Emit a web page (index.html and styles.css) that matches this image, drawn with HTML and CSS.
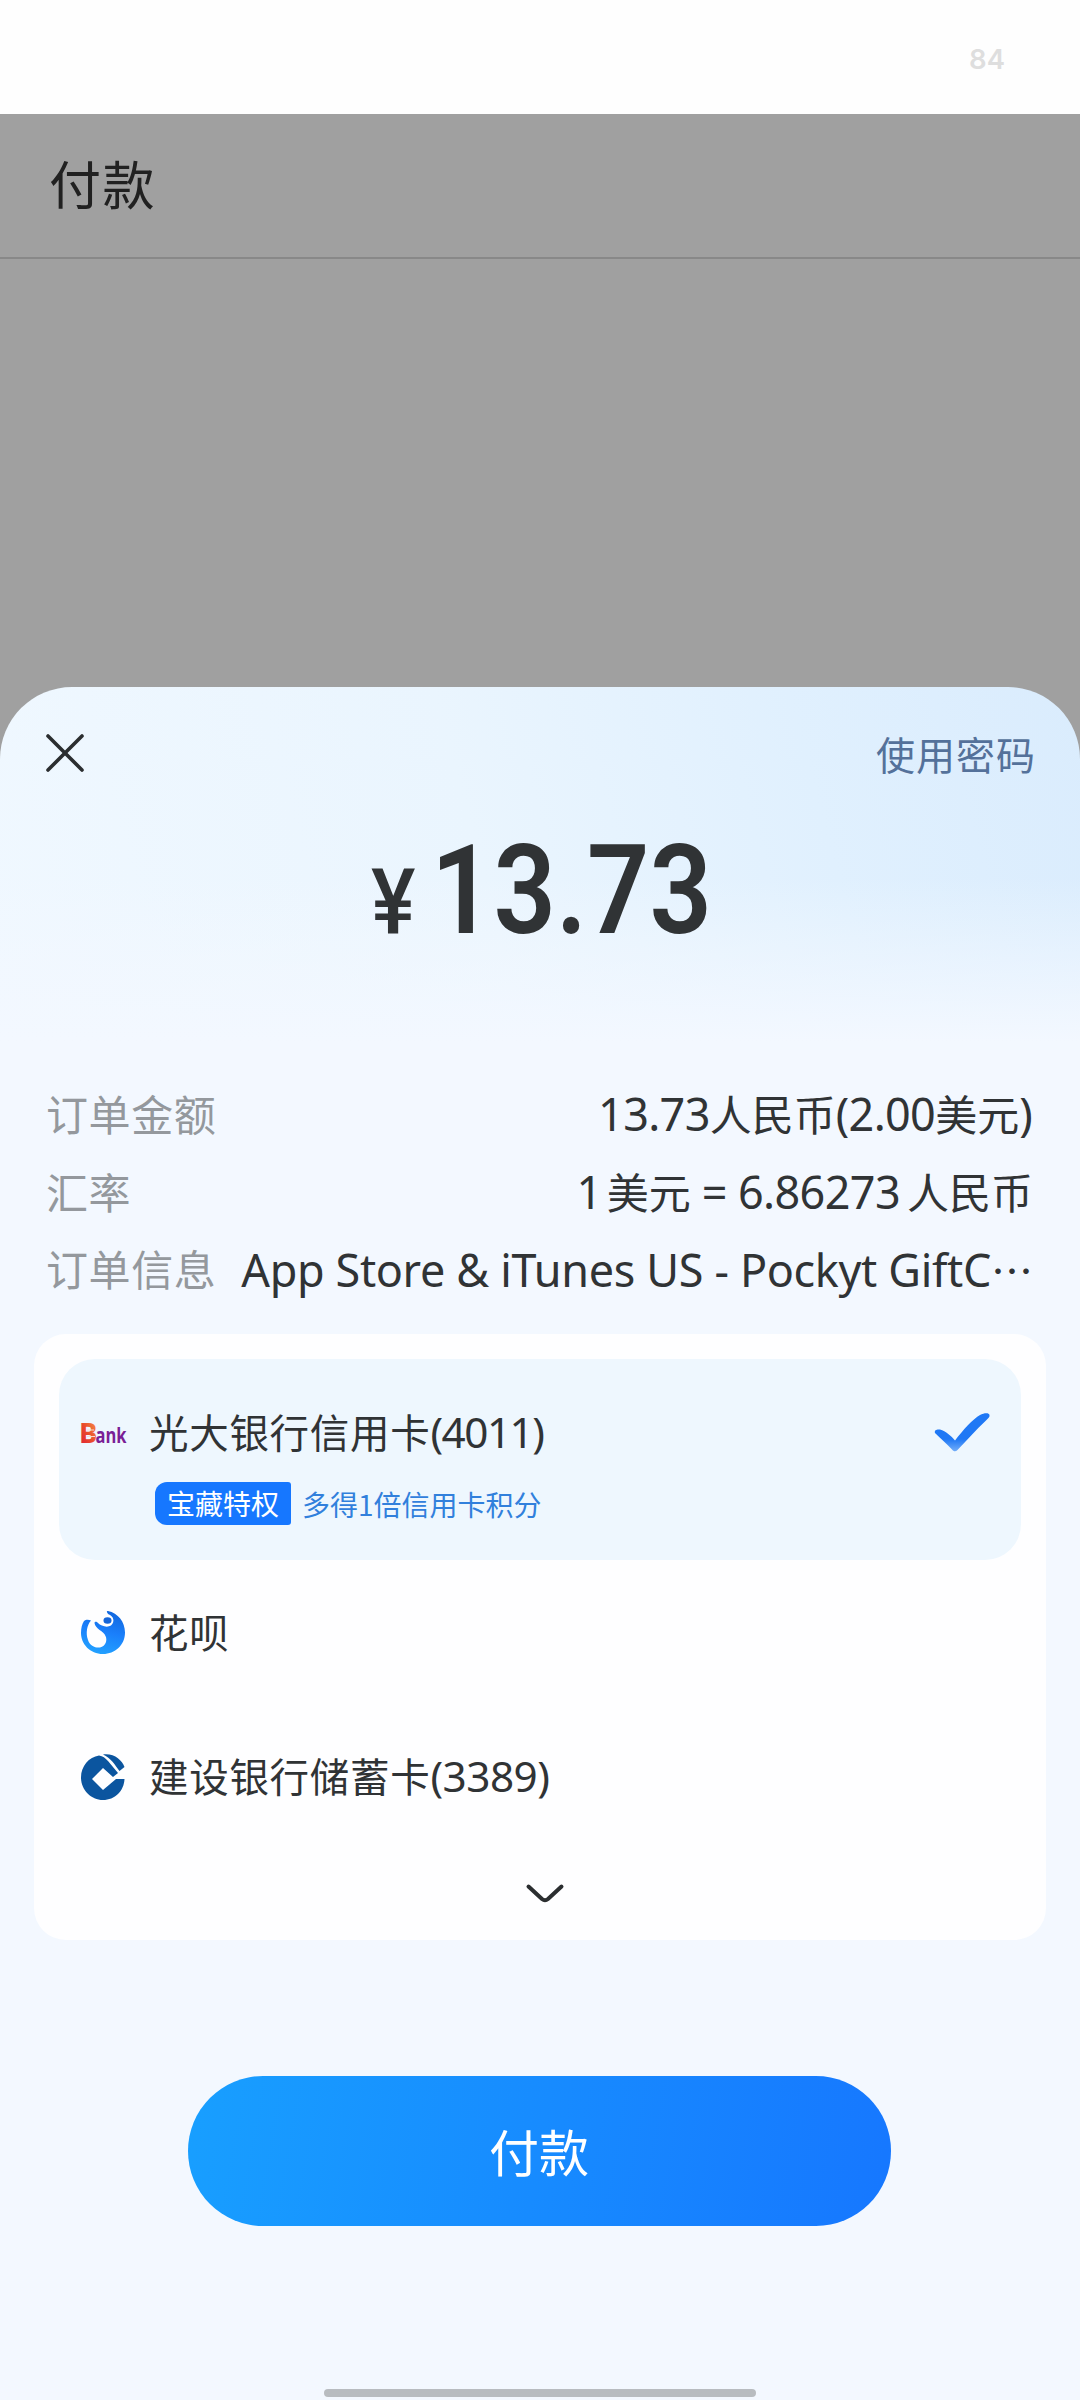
FILE: index.html
```html
<!DOCTYPE html>
<html lang="zh-CN">
<head>
<meta charset="utf-8">
<title>付款</title>
<link rel="stylesheet" href="styles.css">
</head>
<body>
<div class="status"><span class="battery">84</span></div>
<header class="page-head"><h1>付款</h1></header>
<main class="backdrop">
  <section class="sheet">
    <div class="sheet-bar">
      <svg class="close" viewBox="0 0 38 38"><path d="M2 2 36 36M36 2 2 36"/></svg>
      <a class="use-pwd">使用密码</a>
    </div>
    <div class="amount"><span class="yen">¥</span><span class="sum">13.73</span></div>
    <dl class="info">
      <div class="row"><dt>订单金额</dt><dd class="v1"><b>13.73</b>人民币<b>(2.00</b>美元<b>)</b></dd></div>
      <div class="row"><dt>汇率</dt><dd class="v2"><b class="gap one">1</b>美元<b class="gap"> = 6.86273</b>人民币</dd></div>
      <div class="row"><dt>订单信息</dt><dd class="v3"><b>App Store &amp; iTunes US - Pockyt GiftC</b><span class="dots">⋯</span></dd></div>
    </dl>
    <div class="card">
      <div class="item selected">
        <div class="line">
          <svg class="logo bank" viewBox="0 0 46 46">
            <defs><linearGradient id="eb" x1="0" y1="1" x2="1" y2="0"><stop offset="0" stop-color="#dd1838"/><stop offset=".5" stop-color="#ea4c2c"/><stop offset="1" stop-color="#f6a04a"/></linearGradient></defs>
            <text x="-1" y="33" class="eb-e" fill="url(#eb)" textLength="17" lengthAdjust="spacingAndGlyphs">B</text>
            <path d="M6 20H13M6 26.500H14" stroke="#fbd9d2" stroke-width="1.200"/>
            <text x="14.500" y="33" class="eb-t" textLength="31" lengthAdjust="spacingAndGlyphs">ank</text>
          </svg>
          <span class="name tight">光大银行信用卡<b>(4011)</b></span>
          <svg class="check" viewBox="0 0 56 40">
            <defs><linearGradient id="ck" x1="0" y1="0" x2="0" y2="1"><stop offset=".68" stop-color="#1f78f5"/><stop offset="1" stop-color="#72adf9"/></linearGradient></defs>
            <path fill="url(#ck)" d="M1 20C0 17 3 16 6 16.500 12 18 17 23 21 27.500 29 17 39 6 46 2 50 0 55-.5 55.500 2 56 4 54 5.500 52 7.500 42 17 32 28 23.500 37 21.500 39 19.500 38.500 18 36.500 12.500 30.500 7 26 1 20Z"/>
          </svg>
        </div>
        <div class="promo"><span class="tag">宝藏特权</span><span class="promo-text">多得1倍信用卡积分</span></div>
      </div>
      <div class="item huabei">
        <svg class="logo" viewBox="0 0 44 44">
          <defs><linearGradient id="hb" x1=".75" y1="0" x2=".5" y2="1"><stop offset="0" stop-color="#1166dd"/><stop offset=".5" stop-color="#1a7ffb"/><stop offset="1" stop-color="#22a0ff"/></linearGradient></defs>
          <path fill="url(#hb)" d="M3 10C5 8 8 8.500 10 9.500 6 14 4.500 22 7 29 9 35 14 37 19 36.500 25 35 26.500 29 24.500 25 23 20 14 18 13.500 12 14 10 16 11 17 12 20 15 26 17 30 14.500 34 11 33 5 27 3 26 1 25 0 27 0 37 2 44 11 44 21.500 44 34 34 43 22 43 9 43 0 33 0 22 0 17 1 13 3 10Z"/>
          <ellipse cx="26.500" cy="9.500" rx="4" ry="3.300" fill="#1464d8"/>
        </svg>
        <span class="name">花呗</span>
      </div>
      <div class="item ccb">
        <svg class="logo" viewBox="0 0 44 46">
          <path fill="#0b559f" d="M18 1.500C8 3 0 12 0 23.500 0 36 10 46 22 46 34 46 43 37 43.500 25L35 25 22 36 11 25 22 14 32 23 37 19 27 7C24 4 22 2 18 1.500Z"/>
          <path fill="#0b559f" d="M22 .5C33-1 41 6 43.500 13L38.500 17C34 11 30 4 22 .5Z"/>
        </svg>
        <span class="name">建设银行储蓄卡<b>(3389)</b></span>
      </div>
      <svg class="more" viewBox="0 0 38 20"><path d="M2.500 2.500 16 15Q19 17.500 22 15L35.500 2.500"/></svg>
    </div>
    <button class="pay">付款</button>
    <div class="home-bar"></div>
  </section>
</main>
</body>
</html>
```
FILE: styles.css
```css
* { box-sizing: border-box; margin: 0; padding: 0; }
body {
  width: 1080px; height: 2400px; overflow: hidden;
  display: flex; flex-direction: column;
  background: #a0a0a0; color: #303335;
  font-family: "Noto Sans CJK SC", sans-serif;
}
b { font: 400 1.07em/1 "Noto Sans", sans-serif; }
svg { display: block; flex: none; overflow: visible; }

.status { height: 114px; background: #fefefe; display: flex; justify-content: flex-end; padding: 42px 75px 0 0; }
.battery { font: 600 27.5px/34px Inter, sans-serif; color: #dedede; }
.page-head { height: 145px; border-bottom: 2px solid #888; padding: 0 0 6px 49px; display: flex; align-items: center; }
.page-head h1 { font-size: 52px; font-weight: 400; line-height: 60px; letter-spacing: 1.5px; color: #212121; }

.backdrop { flex: 1; padding-top: 428px; }
.sheet {
  height: 1713px; border-radius: 72px 72px 0 0;
  display: flex; flex-direction: column; align-items: center;
  background:
    linear-gradient(180deg, rgba(243,248,255,0) 190px, #f3f8ff 355px),
    linear-gradient(75deg, #f0f8ff 0, #eaf5fe 45%, #e0f0fe 75%, #daecfd 100%) 0 0 / 100% 360px no-repeat,
    #f3f8ff;
}
.sheet-bar { width: 100%; height: 133px; padding: 47px 44px 0 46px; display: flex; justify-content: space-between; align-items: flex-start; }
.close { width: 38px; height: 38px; }
.close path, .more path { fill: none; stroke: #2b2e30; stroke-width: 3.6; stroke-linecap: round; }
.use-pwd { font-size: 39px; line-height: 44px; letter-spacing: 1px; margin-top: -3px; color: #54719a; }

.amount { width: 338px; height: 134px; padding-top: 4px; display: flex; align-items: baseline; white-space: nowrap; font-family: Roboto, sans-serif; color: #303335; }
.yen { flex: none; width: 60px; font-size: 91px; line-height: 134px; font-weight: 500; transform: scaleX(.92); transform-origin: 0 50%; }
.sum { flex: none; font-size: 125px; line-height: 134px; font-weight: 600; transform: scaleX(.875); transform-origin: 0 50%; }

.info { width: 100%; height: 380px; padding: 120px 47px 0 46px; }
.row { height: 77.7px; display: flex; justify-content: space-between; align-items: center; white-space: nowrap; font-size: 42px; line-height: 60px; }
.row dt { color: #94989d; letter-spacing: .6px; }
.row dd { padding-top: 1px; }
.v1 { margin-right: 1px; }
.v1 b { letter-spacing: -.65px; }
.v2 b { letter-spacing: -.6px; }
.v3 b { letter-spacing: -.34px; }
.gap { margin-right: 7px; white-space: pre; }
.v2 .one { margin-right: 5px; }

.card { width: 1012px; height: 606px; background: #fefeff; border-radius: 32px; padding: 25px; display: flex; flex-direction: column; align-items: center; }
.item { width: 962px; padding-left: 22px; display: flex; align-items: center; }
.selected { height: 201px; flex-direction: column; align-items: stretch; background: #eef7fe; border-radius: 36px; padding-top: 44px; }
.line { display: flex; align-items: center; height: 60px; padding-right: 31px; }
.logo { width: 44px; height: 46px; }
.bank { width: 46px; margin-right: -2px; }
.eb-e { font: 900 28px Roboto, sans-serif; }
.eb-t { font: 700 22px "Open Sans", sans-serif; fill: #7a1f96; }
.name { margin: -4px 0 0 24px; font-size: 39.5px; line-height: 60px; letter-spacing: .7px; white-space: nowrap; }
.name b { letter-spacing: -.5px; }
.tight b { letter-spacing: -1.5px; }
.check { width: 56px; height: 40px; margin-left: auto; }
.promo { display: flex; align-items: center; margin: 19px 0 0 74px; height: 43px; }
.tag { width: 136px; height: 43px; border-radius: 12px 3px 3px 12px; background: #1677ff; color: #fff; text-align: center; font-size: 28px; line-height: 42px; }
.promo-text { margin-left: 11px; font-size: 28px; line-height: 42px; color: #3180dc; white-space: nowrap; }
.huabei { height: 146px; }
.ccb { height: 142px; }
.more { width: 38px; height: 20px; margin: 36px 0 0 9px; }
.more path { stroke-width: 4; }

.pay { width: 703px; height: 150px; margin: 136px 2px 0 0; padding-bottom: 2px; border: 0; border-radius: 75px; background: linear-gradient(100deg, #189fff 0, #1677ff 100%); color: #fff; font: 400 50px/60px "Noto Sans CJK SC", sans-serif; }
.home-bar { width: 432px; height: 8px; margin-top: 163px; border-radius: 4px; background: #b8bcc0; }
```
